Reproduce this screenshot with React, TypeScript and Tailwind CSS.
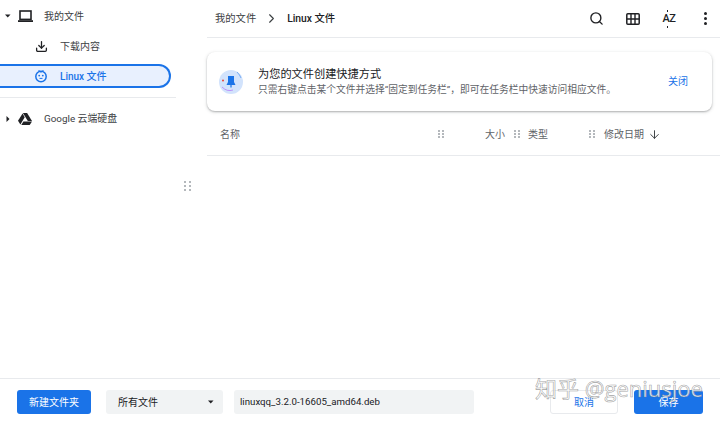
import { ArrowDown, ChevronRight, Download, Search } from "lucide-react";

const cjk = "font-['Roboto','Noto_Sans_CJK_SC',sans-serif]";

function Grip({ className = "" }: { className?: string }) {
  return (
    <div className={`grid grid-cols-2 gap-x-[2px] gap-y-[1px] ${className}`}>
      {[0, 1, 2, 3, 4, 5].map((i) => (
        <span key={i} className="h-[2px] w-[2px] bg-[#b4b8bc]" />
      ))}
    </div>
  );
}

function Caret({ dir }: { dir: "down" | "right" }) {
  return (
    <svg width="8" height="8" viewBox="0 0 8 8" className="shrink-0">
      {dir === "down" ? <path d="M1 2.5 H6.5 L3.75 5.5 Z" fill="#202124" /> : <path d="M2.5 1 V7 L5.5 4 Z" fill="#202124" />}
    </svg>
  );
}

function LaptopIcon() {
  return (
    <svg width="15" height="13" viewBox="0 0 15 13" fill="none" className="shrink-0">
      <rect x="2" y="1" width="11" height="8.4" stroke="#202124" strokeWidth="1.6" />
      <rect x="0" y="10.2" width="15" height="1.8" fill="#202124" />
    </svg>
  );
}

function PenguinIcon() {
  return (
    <svg width="14" height="14" viewBox="0 0 14 14" fill="none" className="shrink-0">
      <circle cx="7" cy="7.5" r="5.2" stroke="#1a73e8" strokeWidth="1.5" />
      <path d="M4.5 1.5 L7 3 L9.5 1.5" stroke="#1a73e8" strokeWidth="1.2" />
      <circle cx="5.2" cy="6.6" r="0.9" fill="#1a73e8" />
      <circle cx="8.8" cy="6.6" r="0.9" fill="#1a73e8" />
      <path d="M5.5 9.4 H8.5" stroke="#1a73e8" strokeWidth="1" />
    </svg>
  );
}

function DriveIcon() {
  return (
    <svg width="14" height="12" viewBox="0 0 14 12" className="shrink-0">
      <path d="M4.9 0 H9.1 L14 8 H9.8 Z" fill="#202124" />
      <path d="M4.6 0.6 L6.7 4.2 L2.4 11.6 L0 7.8 Z" fill="#202124" />
      <path d="M5.4 8.4 H14 L11.7 12 H3.3 Z" fill="#202124" />
    </svg>
  );
}

function PinArt() {
  return (
    <svg width="24" height="24" viewBox="0 0 24 24" className="shrink-0">
      <circle cx="12" cy="12" r="12" fill="#d2e3fc" />
      <path d="M18 2 Q21 5 22 8" stroke="#1a73e8" strokeWidth="0.5" fill="none" />
      <path d="M3 17 Q8 22 14 20" stroke="#a142f4" strokeWidth="0.5" fill="none" />
      <circle cx="4" cy="10.5" r="1" fill="#ea4335" />
      <path d="M9 6 H15 V12 L16.5 15 H7.5 L9 12 Z" fill="#1a73e8" />
      <rect x="11.4" y="15" width="1.2" height="2.5" fill="#1a73e8" />
    </svg>
  );
}

function TableIcon() {
  return (
    <svg width="14" height="12" viewBox="0 0 14 12" fill="none" className="shrink-0">
      <rect x="0.8" y="0.8" width="12.4" height="10.4" rx="1" stroke="#202124" strokeWidth="1.5" />
      <path d="M0.8 6 H13.2 M5 0.8 V11.2 M9 0.8 V11.2" stroke="#202124" strokeWidth="1.4" />
    </svg>
  );
}

function SortIcon() {
  return (
    <div className="relative flex h-[18px] w-[16px] items-center justify-center">
      <span className="font-['Roboto',sans-serif] text-[11px] font-medium leading-none tracking-[-0.5px] text-[#202124]">AZ</span>
      <span className="absolute left-[6px] top-0 h-[2px] w-[1px] bg-[#202124]" />
      <span className="absolute bottom-0 left-[6px] h-[2px] w-[1px] bg-[#202124]" />
    </div>
  );
}

export default function App() {
  return (
    <div className={`relative flex h-[422px] w-[720px] flex-col overflow-hidden bg-white ${cjk}`}>
      <div className="flex min-h-0 flex-1">
        <aside className="relative w-[207px] shrink-0 pr-[31px] pt-[4px] text-[10px] text-[#3c4043]">
          <div className="flex h-[24px] items-center pl-[4px]">
            <Caret dir="down" />
            <span className="ml-[6px]"><LaptopIcon /></span>
            <span className="ml-[11px]">我的文件</span>
          </div>
          <div className="mt-[6px] flex h-[24px] items-center pl-[35px]">
            <Download size={13} strokeWidth={2.4} color="#202124" />
            <span className="ml-[12px]">下载内容</span>
          </div>
          <div className="mr-[5px] mt-[6px] flex h-[24px] w-[171px] items-center rounded-r-full border-2 border-l-0 border-[#1a73e8] bg-[#e8f0fe] pl-[34px] font-medium text-[#1a73e8]">
            <PenguinIcon />
            <span className="ml-[12px]">Linux 文件</span>
          </div>
          <div className="mt-[9px] h-px bg-[#e8eaed]" />
          <div className="mt-[9px] flex h-[24px] items-center pl-[4px]">
            <Caret dir="right" />
            <span className="ml-[6px]"><DriveIcon /></span>
            <span className="ml-[12px] text-[9.9px]">Google 云端硬盘</span>
          </div>
          <Grip className="absolute left-[184px] top-[181px] gap-x-[3px] gap-y-[2px]" />
        </aside>

        <main className="flex min-w-0 flex-1 flex-col">
          <header className="flex h-[38px] shrink-0 items-center border-b border-[#e8eaed] pl-[8px] pr-[13px] text-[10.3px]">
            <span className="text-[#3c4043]">我的文件</span>
            <ChevronRight size={15} strokeWidth={1.8} color="#3c4043" className="mx-[8px]" />
            <span className="font-medium text-[#202124]">Linux 文件</span>
            <div className="ml-auto flex items-center">
              <Search size={15} strokeWidth={2.2} color="#202124" />
              <span className="ml-[22px]"><TableIcon /></span>
              <span className="ml-[21px]"><SortIcon /></span>
              <div className="ml-[27px] flex w-[3px] flex-col gap-[2px]">
                <span className="h-[3px] w-[3px] rounded-full bg-[#202124]" />
                <span className="h-[3px] w-[3px] rounded-full bg-[#202124]" />
                <span className="h-[3px] w-[3px] rounded-full bg-[#202124]" />
              </div>
            </div>
          </header>

          <section className="ml-0 mr-[8px] mt-[14px] flex h-[59px] shrink-0 items-center rounded-lg bg-white pl-[12px] pr-[24px] shadow-[0_1px_2px_rgba(60,64,67,0.35),0_1px_4px_rgba(60,64,67,0.12)]">
            <PinArt />
            <div className="ml-[15px] min-w-0 flex-1">
              <div className="text-[11.2px] leading-[16px] text-[#202124]">为您的文件创建快捷方式</div>
              <div className="whitespace-nowrap text-[9.75px] leading-[14px] text-[#5f6368]">只需右键点击某个文件并选择“固定到任务栏”，即可在任务栏中快速访问相应文件。</div>
            </div>
            <span className="text-[10px] text-[#1a73e8]">关闭</span>
          </section>

          <div className="mt-[2px] flex h-[43px] shrink-0 items-center border-b border-[#e8eaed] pl-[13px] text-[10px] text-[#5f6368]">
            <span className="w-[218px]">名称</span>
            <Grip />
            <span className="ml-[41px] w-[20px]">大小</span>
            <Grip className="ml-[9px]" />
            <span className="ml-[8px] w-[20px]">类型</span>
            <Grip className="ml-[41px]" />
            <span className="ml-[9px] w-[40px]">修改日期</span>
            <ArrowDown size={13} strokeWidth={1.8} color="#3c4043" className="ml-[4px]" />
          </div>
        </main>
      </div>

      <footer className="flex h-[44px] shrink-0 items-start border-t border-[#e8eaed] pl-[17px] pt-[11px] text-[10px]">
        <button className="h-[24px] w-[74px] rounded-[3px] bg-[#1a73e8] text-center text-white">新建文件夹</button>
        <div className="ml-[15px] flex h-[24px] w-[117px] items-center justify-between rounded-[3px] bg-[#f1f3f4] pl-[12px] pr-[8px] text-[#202124]">
          <span>所有文件</span>
          <Caret dir="down" />
        </div>
        <div className="ml-[11px] flex h-[24px] w-[240px] items-center rounded-[3px] bg-[#f1f3f4] pl-[6px] text-[9.7px] text-[#202124]">linuxqq_3.2.0-16605_amd64.deb</div>
        <button className="ml-[76px] h-[24px] w-[68px] rounded-[3px] border border-[#e8eaed] bg-white text-center text-[#1a73e8]">取消</button>
        <button className="ml-[16px] h-[24px] w-[69px] rounded-[3px] bg-[#1a73e8] text-center text-white">保存</button>
      </footer>

      <div className="pointer-events-none absolute left-[535px] top-[373px] whitespace-nowrap font-['Open_Sans','Noto_Sans_CJK_SC',sans-serif] text-[22px] leading-[30px] text-white/80 [-webkit-text-stroke:0.6px_rgba(120,120,120,0.7)]">
        知乎 @geniusjoe
      </div>
    </div>
  );
}
